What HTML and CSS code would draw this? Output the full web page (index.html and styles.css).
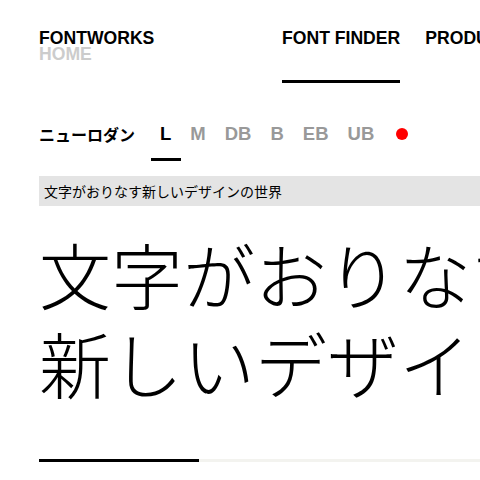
FILE: index.html
```html
<!DOCTYPE html>
<html lang="ja">
<head>
<meta charset="utf-8">
<title>FONTWORKS — ニューロダン</title>
<link rel="stylesheet" href="styles.css">
</head>
<body>
<div class="page">
  <header class="header">
    <div class="logo">
      <div class="logo-name">FONTWORKS</div>
      <div class="logo-home">HOME</div>
    </div>
    <nav class="nav">
      <a class="nav-link is-active" href="#">FONT FINDER</a>
      <a class="nav-link" href="#">PRODUCTS</a>
      <a class="nav-link" href="#">SUPPORT</a>
    </nav>
  </header>

  <div class="weights">
    <span class="family">ニューロダン</span>
    <span class="weight is-active">L</span>
    <span class="weight">M</span>
    <span class="weight">DB</span>
    <span class="weight">B</span>
    <span class="weight">EB</span>
    <span class="weight">UB</span>
    <span class="dot-wrap"><span class="dot"></span></span>
  </div>

  <div class="sample-bar">文字がおりなす新しいデザインの世界</div>

  <div class="sample">文字がおりなす<br>新しいデザインの世界</div>

  <div class="progress"><div class="progress-fill"></div></div>
</div>
</body>
</html>
```
FILE: styles.css
```css
html, body {
  margin: 0;
  padding: 0;
  background: #fff;
  overflow: hidden;
}
body {
  width: 480px;
  height: 480px;
  font-family: "Liberation Sans", Arial, "Noto Sans CJK JP", sans-serif;
  color: #000;
}
.page {
  padding-left: 39px;
}
.header {
  display: flex;
  padding-top: 30px;
  white-space: nowrap;
}
.logo {
  width: 243px;
  flex: none;
  font-size: 17.6px;
  font-weight: bold;
  line-height: 16px;
}
.logo-home {
  color: #cccccc;
}
.nav {
  display: flex;
  gap: 25px;
  flex: none;
}
.nav-link {
  display: block;
  font-size: 17.6px;
  font-weight: bold;
  line-height: 16px;
  color: #000;
  text-decoration: none;
  padding-bottom: 34px;
  border-bottom: 3px solid transparent;
}
.nav-link.is-active {
  border-bottom-color: #000;
}
.weights {
  display: flex;
  align-items: flex-start;
  margin-top: 41px;
}
.family {
  font-family: "Noto Sans CJK JP", sans-serif;
  font-size: 16px;
  font-weight: bold;
  line-height: 20px;
  margin-right: 15.5px;
}
.weight {
  font-size: 18.5px;
  font-weight: bold;
  line-height: 20px;
  color: #999999;
  padding: 0 9.5px 14px;
  border-bottom: 3px solid transparent;
}
.weight.is-active {
  color: #000;
  border-bottom-color: #000;
}
.dot-wrap {
  display: flex;
  align-items: center;
  height: 20px;
  padding-left: 12px;
}
.dot {
  width: 12px;
  height: 12px;
  border-radius: 50%;
  background: #ff0000;
}
.sample-bar {
  margin-top: 15px;
  height: 30px;
  line-height: 30px;
  background: #e4e4e4;
  padding-left: 5px;
  font-family: "Noto Sans CJK JP", sans-serif;
  font-size: 14px;
  white-space: nowrap;
}
.sample {
  margin-top: 22px;
  font-family: "Noto Sans CJK JP", sans-serif;
  font-weight: 300;
  font-size: 72px;
  line-height: 89px;
  white-space: nowrap;
}
.progress {
  margin-top: 53px;
  height: 3px;
  background: #f3f3ef;
}
.progress-fill {
  width: 160px;
  height: 3px;
  background: #000;
}
```
